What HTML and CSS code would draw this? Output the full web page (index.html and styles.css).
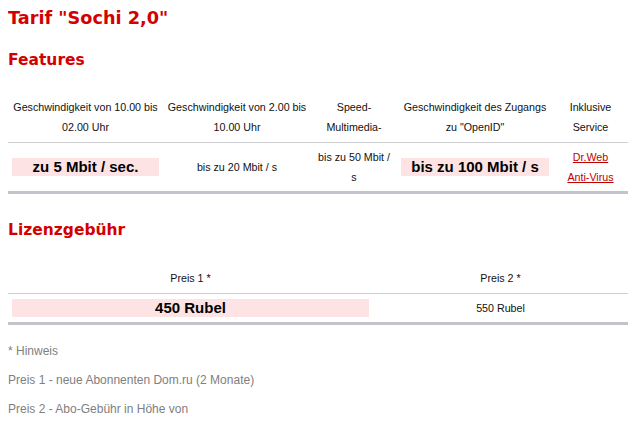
FILE: index.html
```html
<!DOCTYPE html>
<html lang="de">
<head>
<meta charset="utf-8">
<title>Tarif Sochi 2,0</title>
<link rel="stylesheet" href="styles.css">
</head>
<body>
<h1 class="title">Tarif "Sochi 2,0"</h1>
<h2 class="section">Features</h2>
<table class="tbl tbl-features">
  <colgroup>
    <col class="c1"><col class="c2"><col class="c3"><col class="c4"><col class="c5">
  </colgroup>
  <thead>
    <tr>
      <th>Geschwindigkeit von 10.00 bis 02.00 Uhr</th>
      <th>Geschwindigkeit von 2.00 bis 10.00 Uhr</th>
      <th>Speed-Multimedia-</th>
      <th>Geschwindigkeit des Zugangs zu "OpenID"</th>
      <th>Inklusive Service</th>
    </tr>
  </thead>
  <tbody>
    <tr>
      <td><span class="hl">zu 5 Mbit / sec.</span></td>
      <td>bis zu 20 Mbit / s</td>
      <td>bis zu 50 Mbit / s</td>
      <td><span class="hl">bis zu 100 Mbit / s</span></td>
      <td><a class="link" href="#">Dr.Web</a><br><a class="link" href="#">Anti-Virus</a></td>
    </tr>
  </tbody>
</table>
<h2 class="section section-gap">Lizenzgebühr</h2>
<table class="tbl tbl-price">
  <colgroup>
    <col class="p1"><col class="p2">
  </colgroup>
  <thead>
    <tr>
      <th>Preis 1 *</th>
      <th>Preis 2 *</th>
    </tr>
  </thead>
  <tbody>
    <tr>
      <td><span class="hl">450 Rubel</span></td>
      <td>550 Rubel</td>
    </tr>
  </tbody>
</table>
<div class="notes">
  <p>* Hinweis</p>
  <p>Preis 1 - neue Abonnenten Dom.ru (2 Monate)</p>
  <p>Preis 2 - Abo-Gebühr in Höhe von</p>
</div>
</body>
</html>
```
FILE: styles.css
```css
html, body {
  background: #fff;
}
body {
  margin: 8px;
  font-family: "Liberation Sans", Arial, sans-serif;
  color: #111;
}
.title {
  margin: 0 0 22px;
  font-family: "DejaVu Sans", Verdana, sans-serif;
  font-size: 17.7px;
  line-height: 21px;
  font-weight: bold;
  color: #d40000;
}
.section {
  margin: 0 0 22px;
  font-family: "DejaVu Sans", Verdana, sans-serif;
  font-size: 15.5px;
  line-height: 19px;
  font-weight: bold;
  color: #d40000;
}
.section-gap {
  margin-top: 27px;
  margin-bottom: 23px;
}
.tbl {
  width: 620px;
  table-layout: fixed;
  border-collapse: separate;
  border-spacing: 0;
  font-size: 10.7px;
  line-height: 20px;
}
.tbl th {
  font-weight: normal;
  text-align: center;
  vertical-align: middle;
  padding: 5px 4px;
  border-bottom: 1px solid #cdcdd2;
}
.tbl td {
  text-align: center;
  vertical-align: middle;
  padding: 4px 4px;
  border-bottom: 3px solid #c3c3cb;
}
.c1 { width: 155px; }
.c2 { width: 148px; }
.c3 { width: 86px; }
.c4 { width: 156px; }
.c5 { width: 75px; }
.p1 { width: 365px; }
.p2 { width: 255px; }
.hl {
  display: block;
  margin: 1px 0;
  background: #fde3e3;
  font-size: 15px;
  line-height: 18px;
  font-weight: bold;
  color: #000;
}
.link {
  color: #c00000;
  text-decoration: underline;
}
.notes {
  padding-top: 18px;
  font-size: 12px;
  line-height: 17px;
  color: #808080;
}
.notes p {
  margin: 0 0 12px;
}
```
